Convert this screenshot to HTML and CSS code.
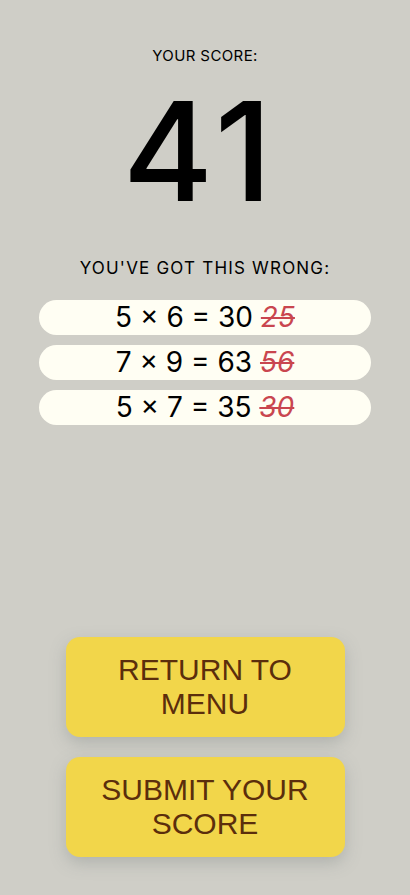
FILE: index.html
```html
<!DOCTYPE html>
<html>
<head>
<meta charset="utf-8">
<link rel="stylesheet" href="styles.css">
</head>
<body>
<main class="screen">
  <div class="label">YOUR SCORE:</div>
  <div class="score">41</div>
  <div class="label wrong-label">YOU'VE GOT THIS WRONG:</div>
  <ul class="mistakes">
    <li class="row">5 × 6 = 30 <s class="bad">25</s></li>
    <li class="row">7 × 9 = 63 <s class="bad">56</s></li>
    <li class="row">5 × 7 = 35 <s class="bad">30</s></li>
  </ul>
  <div class="actions">
    <button class="btn">RETURN TO<br>MENU</button>
    <button class="btn">SUBMIT YOUR<br>SCORE</button>
  </div>
</main>
</body>
</html>
```
FILE: styles.css
```css
html, body {
  margin: 0;
  padding: 0;
  background: #cfcec7;
}
.screen {
  height: 895px;
  display: flex;
  flex-direction: column;
  align-items: center;
  font-family: Inter, "Liberation Sans", sans-serif;
  color: #000;
  box-sizing: border-box;
  padding-top: 46px;
}
.label {
  font-size: 15px;
  line-height: 20px;
  letter-spacing: 0.4px;
}
.score {
  font-family: Inter, "Liberation Sans", sans-serif;
  font-weight: 500;
  font-size: 138px;
  line-height: 130px;
  margin-top: 20px;
  margin-right: 10px;
  margin-bottom: 1px;
  letter-spacing: 5px;
}
.wrong-label {
  font-size: 17px;
  margin-top: 41px;
  letter-spacing: 1.2px;
}
.mistakes {
  list-style: none;
  margin: 22px 0 0;
  padding: 0;
  display: flex;
  flex-direction: column;
  gap: 10px;
}
.row {
  width: 332px;
  height: 35px;
  border-radius: 18px;
  background: #fffef3;
  font-size: 28px;
  line-height: 35px;
  text-align: center;
}
.bad {
  color: #c9464f;
  font-style: italic;
}
.actions {
  margin-top: auto;
  margin-bottom: 38px;
  display: flex;
  flex-direction: column;
  gap: 20px;
}
.btn {
  width: 279px;
  height: 100px;
  border: none;
  border-radius: 14px;
  background: #f2d64a;
  color: #5b2e0c;
  font-family: "Liberation Sans", Arial, sans-serif;
  font-size: 30px;
  line-height: 1.15;
  box-shadow: 0 6px 16px rgba(120, 130, 125, 0.35);
  padding: 0;
}
```
